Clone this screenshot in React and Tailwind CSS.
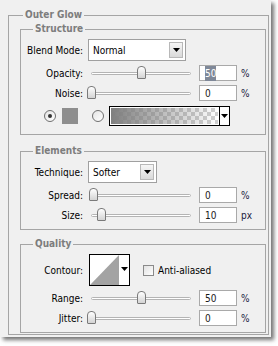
import React from 'react';

const FONT = { fontFamily: "'DejaVu Sans Condensed', 'DejaVu Sans', 'Liberation Sans', sans-serif" };

function Arrow() {
    return (
        <svg width="7" height="4" viewBox="0 0 7 4">
            <path d="M0 0h7L3.5 4z" fill="#000" />
        </svg>
    );
}

function Slider({ at }) {
    return (
        <div className="relative ml-[4px] w-[104px] h-[16px]">
            <div className="absolute left-[4px] right-0 top-[7px] h-[3px] rounded-full border border-[#b4b4b4] bg-white" />
            <div
                className="absolute top-[1px] w-[9px] h-[13px] rounded-t-[4px] rounded-b-[1px] border border-[#7a7a7a] bg-gradient-to-b from-white to-[#d4d4d4]"
                style={{ left: at }}
            />
        </div>
    );
}

function Field({ value, selected, unit }) {
    return (
        <>
            <div className="ml-[8px] w-[38px] h-[16px] border border-[#a9a9a9] bg-white flex items-center pl-[5px] text-[#1a1a1a]">
                {selected ? <span className="bg-[#7f8898] text-white">{value}</span> : value}
            </div>
            <span className="ml-[4px] text-[#1a1a40]">{unit}</span>
        </>
    );
}

function SliderRow({ label, at, value, unit = '%', selected }) {
    return (
        <div className="flex items-center h-[16px]">
            <span className="w-[62px] text-right">{label}</span>
            <Slider at={at} />
            <Field value={value} unit={unit} selected={selected} />
        </div>
    );
}

function Select({ value, width }) {
    return (
        <div className={`ml-[5px] ${width} h-[22px] border border-[#a0a0a0] bg-white flex items-center justify-between pl-[4px] pr-[2px]`}>
            <span>{value}</span>
            <div className="w-[14px] h-[16px] border border-[#b8b8b8] bg-gradient-to-b from-[#f6f6f6] to-[#d9d9d9] flex items-center justify-center">
                <Arrow />
            </div>
        </div>
    );
}

function Radio({ checked }) {
    return (
        <div className="w-[12px] h-[12px] rounded-full border border-[#6f6f6f] bg-gradient-to-br from-[#e4e4e4] to-white flex items-center justify-center">
            {checked && <div className="w-[4px] h-[4px] rounded-full bg-[#333]" />}
        </div>
    );
}

function Group({ title, className = '', children }) {
    return (
        <fieldset className={`border border-[#a5a5a5] pr-[2px] ${className}`}>
            <legend className="ml-[12px] px-[2px] leading-[14px] font-bold text-[#7d7d7d]">{title}</legend>
            {children}
        </fieldset>
    );
}

export default function App() {
    return (
        <div className="w-[278px] h-[346px] bg-white text-[10px] text-black" style={FONT}>
            <div className="w-[271px] h-[337px] bg-[#f0f0f0] shadow-[3px_3px_4px_rgba(0,0,0,0.55)] pt-[8px] pl-[8px]">
                <fieldset className="w-[261px] border border-[#a5a5a5] px-[11px] pr-[2px] pb-[1px]">
                    <legend className="ml-[3px] px-[2px] leading-[14px] font-bold text-[#7d7d7d]">Outer Glow</legend>

                    {/* Structure */}
                    <Group title="Structure">
                        <div className="flex flex-col gap-[4px] pt-[3px] pb-[8px]">
                            <div className="flex items-center h-[22px]">
                                <span className="w-[62px] text-right">Blend Mode:</span>
                                <Select value="Normal" width="w-[98px]" />
                            </div>
                            <SliderRow label="Opacity:" at={50} value="50" selected />
                            <SliderRow label="Noise:" at={0} value="0" />
                            <div className="flex items-center h-[20px] mt-[1px]">
                                <div className="ml-[23px]"><Radio checked /></div>
                                <div className="ml-[6px] w-[16px] h-[16px] bg-[#8e8e8e]" />
                                <div className="ml-[14px]"><Radio /></div>
                                <div className="ml-[5px] w-[121px] h-[20px] border border-black flex">
                                    <div className="flex-1 border border-white bg-[repeating-conic-gradient(#cfcfcf_0%_25%,#ffffff_0%_50%)] bg-[length:8px_8px]">
                                        <div className="w-full h-full bg-gradient-to-r from-[#7f7f7f] to-transparent" />
                                    </div>
                                    <div className="w-[10px] border-l border-black bg-white flex items-center justify-center">
                                        <Arrow />
                                    </div>
                                </div>
                            </div>
                        </div>
                    </Group>

                    {/* Elements */}
                    <Group title="Elements" className="mt-[9px]">
                        <div className="flex flex-col gap-[4px] pt-[3px] pb-[6px]">
                            <div className="flex items-center h-[22px]">
                                <span className="w-[62px] text-right">Technique:</span>
                                <Select value="Softer" width="w-[69px]" />
                            </div>
                            <SliderRow label="Spread:" at={2} value="0" />
                            <SliderRow label="Size:" at={10} value="10" unit="px" />
                        </div>
                    </Group>

                    {/* Quality */}
                    <Group title="Quality" className="mt-[7px]">
                        <div className="flex flex-col gap-[4px] pt-[3px] pb-[6px]">
                            <div className="flex items-center h-[32px]">
                                <span className="w-[62px] text-right">Contour:</span>
                                <div className="ml-[6px] w-[41px] h-[32px] border border-black bg-white flex">
                                    <svg width="30" height="30" viewBox="0 0 30 30" className="block">
                                        <path d="M0 30L29 0V30z" fill="#a3a3a3" />
                                    </svg>
                                    <div className="flex-1 pt-[12px] flex justify-center">
                                        <Arrow />
                                    </div>
                                </div>
                                <div className="ml-[13px] w-[11px] h-[11px] border border-[#8a8a8a] bg-gradient-to-br from-[#e2e2e2] to-white" />
                                <span className="ml-[4px]">Anti-aliased</span>
                            </div>
                            <SliderRow label="Range:" at={50} value="50" />
                            <SliderRow label="Jitter:" at={0} value="0" />
                        </div>
                    </Group>
                </fieldset>
            </div>
        </div>
    );
}
